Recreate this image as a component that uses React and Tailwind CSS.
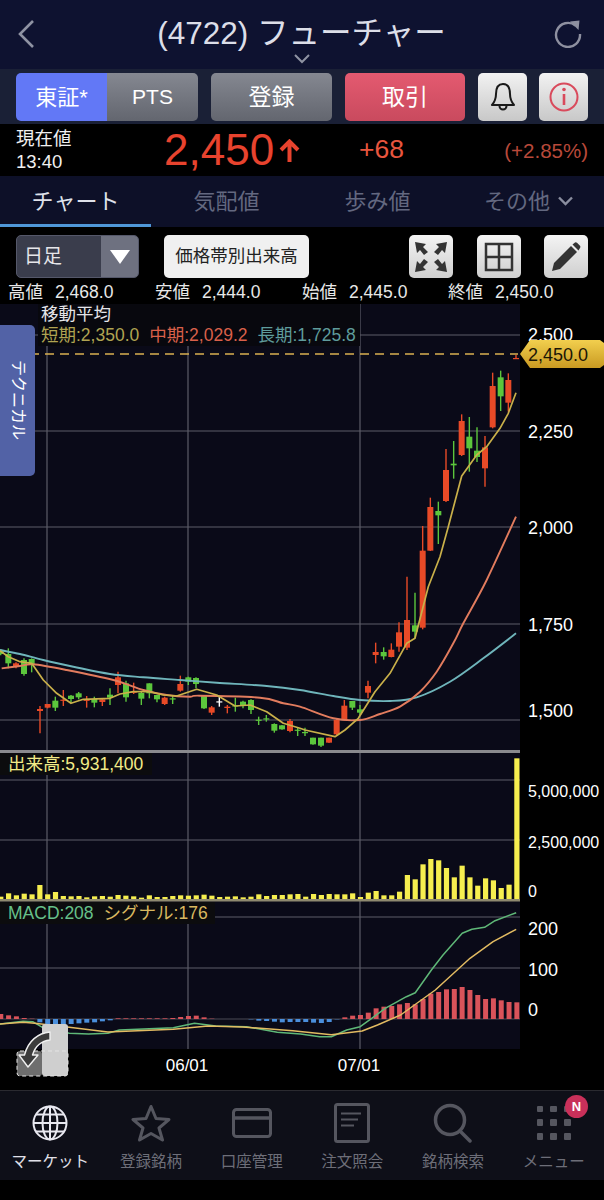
// Stock chart screen, mobile

// candle data: [x, wickTop, bodyTop, bodyBottom, wickBottom, colour]
const RED = "#e84a27";
const GREEN = "#5cc63c";

const earlyCandles = [
  [2, 58, 60, 72, 76, "g"], [25, 55, 72, 100, 115, "g"], [48, 97, 100, 110, 115, "r"], [72, 85, 90, 132, 137, "g"],
  [95, 85, 87, 105, 127, "g"], [120, 228, 237, 243, 310, "r"], [143, 222, 222, 233, 235, "r"], [166, 200, 212, 233, 243, "g"],
  [190, 180, 209, 212, 228, "r"], [213, 195, 197, 207, 218, "g"], [236, 186, 190, 202, 208, "g"], [260, 198, 209, 211, 233, "r"],
  [283, 200, 207, 218, 232, "g"], [307, 205, 208, 216, 228, "r"], [330, 175, 194, 203, 225, "g"], [354, 125, 142, 165, 190, "r"],
  [378, 152, 160, 202, 215, "g"], [401, 158, 185, 187, 192, "r"], [424, 186, 189, 206, 225, "g"], [448, 160, 160, 190, 205, "g"],
  [471, 195, 195, 208, 217, "g"], [494, 200, 203, 222, 225, "r"], [518, 198, 205, 207, 222, "g"], [541, 137, 162, 182, 185, "r"],
  [565, 140, 142, 155, 165, "g"], [588, 142, 144, 162, 175, "g"], [612, 195, 198, 235, 237, "g"], [635, 228, 232, 248, 255, "r"],
  [658, 200, 214, 216, 230, "w"], [682, 225, 230, 234, 250, "r"], [706, 203, 226, 228, 245, "g"], [729, 212, 215, 228, 235, "g"],
  [753, 208, 210, 240, 252, "g"], [776, 260, 269, 271, 285, "g"], [799, 255, 265, 267, 275, "g"], [823, 280, 282, 302, 308, "g"],
  [846, 285, 286, 298, 299, "g"], [870, 267, 273, 303, 307, "r"], [893, 292, 299, 301, 318, "g"],
].map(([x, a, b, c, d, k]) => [x / 3, 630 + a / 3, 630 + b / 3, 630 + c / 3, 630 + d / 3, k]);

const lateCandles = [
  [15, 1103, 1116, 1119, 1128, "g"], [39, 1133, 1133, 1153, 1154, "g"], [63, 1133, 1133, 1157, 1161, "g"], [87, 1133, 1133, 1148, 1149, "r"],
  [110, 1075, 1080, 1123, 1125, "r"], [133, 1020, 1037, 1080, 1081, "r"], [157, 1023, 1023, 1043, 1050, "g"], [180, 1035, 1048, 1058, 1065, "g"],
  [204, 962, 978, 998, 1015, "r"], [227, 848, 876, 885, 910, "r"], [251, 862, 876, 889, 899, "g"], [274, 850, 869, 891, 892, "r"],
  [297, 787, 817, 860, 875, "r"], [321, 650, 780, 863, 870, "r"], [345, 698, 796, 815, 835, "g"], [368, 498, 572, 803, 808, "r"],
  [391, 413, 441, 572, 573, "r"], [415, 425, 453, 466, 552, "g"], [438, 267, 330, 423, 426, "r"], [461, 243, 311, 316, 356, "g"],
  [485, 163, 183, 285, 288, "r"], [508, 171, 230, 265, 335, "g"], [531, 202, 272, 291, 306, "g"], [555, 228, 262, 325, 380, "r"],
  [578, 38, 78, 202, 205, "r"], [602, 32, 52, 109, 153, "g"], [625, 40, 60, 128, 155, "r"], [648, -15, -6, -4, -4, "r"],
].map(([x, a, b, c, d, k]) => [300 + x / 3, 360 + a / 3, 360 + b / 3, 360 + c / 3, 360 + d / 3, k]);

const candles = [...earlyCandles, ...lateCandles];

function joinPoints(early, late) {
  const a = early.map(([x, y]) => [x / 3, 630 + y / 3]);
  const b = late.map(([x, y]) => [300 + x / 3, 360 + y / 3]);
  return [...a, ...b];
}

function toPolyline(points) {
  return points.map(([x, y]) => `${x.toFixed(1)},${y.toFixed(1)}`).join(" ");
}

// catmull-rom, the two slower averages have no kinks
function toSmoothPath(p) {
  let d = `M${p[0][0]} ${p[0][1]}`;
  for (let i = 0; i < p.length - 1; i++) {
    const prev = p[Math.max(i - 1, 0)];
    const next = p[Math.min(i + 2, p.length - 1)];
    const c1x = p[i][0] + (p[i + 1][0] - prev[0]) / 6;
    const c1y = p[i][1] + (p[i + 1][1] - prev[1]) / 6;
    const c2x = p[i + 1][0] - (next[0] - p[i][0]) / 6;
    const c2y = p[i + 1][1] - (next[1] - p[i][1]) / 6;
    d += ` C${c1x.toFixed(1)} ${c1y.toFixed(1)} ${c2x.toFixed(1)} ${c2y.toFixed(1)} ${p[i + 1][0].toFixed(1)} ${p[i + 1][1].toFixed(1)}`;
  }
  return d;
}

const shortMa = toPolyline(joinPoints(
  [[0, 62], [25, 80], [60, 95], [95, 100], [130, 150], [170, 190], [213, 220], [250, 208], [330, 205], [360, 192], [400, 185], [450, 185], [490, 195], [530, 198], [590, 178], [650, 195], [705, 228], [750, 225], [800, 245], [850, 280], [900, 295]],
  [[15, 1110], [105, 1130], [135, 1110], [175, 1075], [225, 995], [270, 940], [320, 850], [345, 835], [385, 680], [420, 590], [445, 500], [485, 348], [530, 285], [560, 260], [600, 205], [625, 160], [648, 98]]
));
const midMa = toSmoothPath(joinPoints(
  [[5, 115], [60, 108], [100, 103], [200, 120], [340, 150], [430, 180], [500, 195], [570, 200], [600, 197], [780, 203], [850, 220]],
  [[0, 1040], [100, 1075], [180, 1080], [240, 1062], [300, 1040], [360, 995], [410, 935], [460, 850], [490, 790], [560, 660], [648, 470]]
));
const longMa = toSmoothPath(joinPoints(
  [[0, 60], [60, 72], [130, 90], [220, 110], [330, 132], [430, 142], [540, 150], [650, 158], [800, 168]],
  [[0, 990], [100, 1008], [180, 1020], [270, 1023], [350, 1012], [450, 965], [550, 895], [648, 820]]
));

const volumeTops = [
  440, 430, 436, 431, 433, 405, 433, 426, 438, 439, 438, 442, 439, 438, 440, 435, 437, 439, 443, 436, 441, 441, 438,
  436, 437, 436, 434, 437, 441, 440, 439, 442, 440, 433, 438, 435, 435, 433, 432, 440, 432, 435, 432, 433, 433, 430,
  441, 428, 423, 436, 436, 425, 375, 388, 343, 327, 331, 354, 382, 347, 382, 407, 385, 391, 414, 404, 25,
];

const macdBars = [
  342, 346, 349, 354, 356, 367, 372, 373, 375, 372, 370, 368, 367, 364, 361, 355, 355, 355, 355, 355, 355, 355, 354,
  351, 348, 347, 352, 356, 357, 357, 357, 357, 358, 362, 363, 365, 367, 366, 366, 366, 368, 369, 366, 358, 352, 347,
  345, 338, 325, 320, 318, 313, 309, 313, 297, 281, 276, 268, 267, 261, 270, 285, 297, 295, 301, 306, 307,
];

function macdPoints(list) {
  return list.map(([x, y]) => `${(x / 2.596).toFixed(1)},${(900 + y / 3).toFixed(1)}`).join(" ");
}

const macdLine = macdPoints([[0, 372], [60, 364], [85, 365], [110, 382], [180, 400], [230, 402], [280, 400], [310, 390], [450, 383], [505, 370], [560, 378], [640, 380], [720, 397], [780, 402], [830, 410], [860, 410], [900, 390], [935, 380], [965, 355], [1000, 325], [1055, 290], [1078, 278], [1120, 210], [1150, 165], [1200, 100], [1225, 88], [1258, 82], [1285, 62], [1340, 38]]);
const signalLine = macdPoints([[0, 372], [60, 367], [90, 370], [180, 382], [280, 396], [450, 388], [540, 378], [630, 381], [760, 392], [860, 404], [940, 393], [980, 375], [1040, 345], [1130, 270], [1220, 175], [1280, 125], [1340, 88]]);

const priceGrid = [335, 431, 527, 624, 720];
const priceLabels = [["2,500", 341], ["2,250", 438], ["2,000", 534], ["1,750", 631], ["1,500", 717]];

function ChartCanvas() {
  return (
    <svg width="604" height="786" viewBox="0 304 604 786" className="block">
      <defs>
        <linearGradient id="tag" x1="0" y1="0" x2="0" y2="1">
          <stop offset="0" stopColor="#f2cf4e" />
          <stop offset="1" stopColor="#c99a22" />
        </linearGradient>
      </defs>
      <rect x="0" y="304" width="520" height="745" fill="#0a0a18" />

      {[47, 188, 360].map((x) => (
        <line key={x} x1={x} x2={x} y1="304" y2="1049" stroke="#5c5c68" strokeWidth="1.2" />
      ))}
      {[...priceGrid, 780, 840, 917, 968].map((y) => (
        <line key={y} x1="0" x2="520" y1={y} y2={y} stroke="#5c5c68" strokeWidth="1.2" />
      ))}
      <line x1="0" x2="520" y1="1019" y2="1019" stroke="#4a4a55" strokeWidth="1" />

      {candles.map(([x, a, b, c, d, k], i) => {
        const color = k === "r" ? RED : k === "g" ? GREEN : "#ffffff";
        return (
          <g key={i}>
            <line x1={x} x2={x} y1={a} y2={d} stroke={color} strokeWidth="1.4" />
            <rect x={x - 3} y={b} width="6" height={Math.max(c - b, 1.2)} fill={color} />
          </g>
        );
      })}
      <path d={longMa} fill="none" stroke="#6fb5bb" strokeWidth="1.9" />
      <path d={midMa} fill="none" stroke="#e27c5e" strokeWidth="1.9" />
      <polyline points={shortMa} fill="none" stroke="#c9b04a" strokeWidth="1.7" strokeLinejoin="round" />

      <line x1="0" x2="518" y1="354" y2="354" stroke="#d9b050" strokeWidth="1.6" strokeDasharray="9 6" />

      <rect x="0" y="750" width="520" height="3" fill="#8a8a8e" />
      {volumeTops.map((top, i) => {
        const x = (2 + 20.3 * i) / 2.596;
        const y = 750 + top / 3;
        return <rect key={i} x={x - 2.6} y={y} width="5.2" height={899 - y} fill="#f6ee4f" />;
      })}
      <rect x="0" y="899" width="520" height="2.5" fill="#8f8a70" />

      {macdBars.map((top, i) => {
        const x = (2 + 20.3 * i) / 2.596;
        const y = 900 + top / 3;
        return top < 358 ? (
          <rect key={i} x={x - 2.5} y={y} width="5" height={1019 - y} fill="#d9535a" />
        ) : (
          <rect key={i} x={x - 2.5} y={1019} width="5" height={y - 1019} fill="#4a8fdc" />
        );
      })}
      <polyline points={macdLine} fill="none" stroke="#5fb878" strokeWidth="1.5" strokeLinejoin="round" />
      <polyline points={signalLine} fill="none" stroke="#e2bb62" strokeWidth="1.5" strokeLinejoin="round" />

      <g fill="#ffffff" fontSize="18">
        {priceLabels.map(([label, y]) => (
          <text key={label} x="528" y={y}>{label}</text>
        ))}
      </g>
      <polygon points="520,354 530,340 600,340 604,343 604,365 600,368 530,368" fill="url(#tag)" />
      <text x="528" y="361" fontSize="18" fill="#1b1606">2,450.0</text>
      <g fill="#ffffff" fontSize="16">
        <text x="528" y="797">5,000,000</text>
        <text x="528" y="848">2,500,000</text>
        <text x="528" y="897">0</text>
      </g>
      <g fill="#ffffff" fontSize="18">
        <text x="528" y="935">200</text>
        <text x="528" y="976">100</text>
        <text x="528" y="1016">0</text>
      </g>
      <g fill="#ffffff" fontSize="17" textAnchor="middle">
        <text x="187" y="1071">06/01</text>
        <text x="359" y="1071">07/01</text>
      </g>

      {/* panel swap handle */}
      <rect x="42" y="1024" width="26" height="52" rx="3" fill="#cfcfcf" />
      <rect x="17" y="1051" width="25" height="25" rx="3" fill="#6e6e6e" />
      <rect x="17" y="1051" width="51" height="25" rx="3" fill="none" stroke="#e4e4e4" strokeDasharray="4 3" />
      <path
        d="M50 1032 C38 1033 28 1041 24.5 1055 L19 1055 L28 1067 L38 1055 L32.5 1055 C35 1047 41 1041 50 1040 Z"
        fill="#3c3c3c"
        stroke="#f0f0f0"
        strokeWidth="1.4"
        strokeLinejoin="round"
      />
    </svg>
  );
}

function ChartOverlays() {
  return (
    <>
      <div className="absolute left-[38px] top-0 h-[42px] w-[322px] bg-[#08080e] pl-[3px] text-[17.5px] leading-[21px]">
        <div className="text-[#e4e4e8]">移動平均</div>
        <div className="flex gap-[10px] whitespace-nowrap">
          <span className="text-[#b0a452]">短期:2,350.0</span>
          <span className="text-[#d9604a]">中期:2,029.2</span>
          <span className="text-[#5f9c9c]">長期:1,725.8</span>
        </div>
      </div>
      <div className="absolute left-0 top-[21px] flex h-[151px] w-[35px] items-center justify-center rounded-r-[5px] bg-[#5262a6]">
        <span className="text-[16px] text-white [text-orientation:sideways] [writing-mode:vertical-rl]">テクニカル</span>
      </div>
      <div className="absolute left-0 top-[449px] h-[22px] w-[152px] bg-[#0c0c0e] pl-[8px] text-[17.5px] leading-[22px] whitespace-nowrap text-[#f3ec88]">
        出来高:5,931,400
      </div>
      <div className="absolute left-0 top-[598px] flex h-[22px] w-[215px] gap-[10px] bg-[#0c0c0e] pl-[8px] text-[17.5px] leading-[22px] whitespace-nowrap">
        <span className="text-[#66c08a]">MACD:208</span>
        <span className="text-[#d8b860]">シグナル:176</span>
      </div>
    </>
  );
}

function Header() {
  return (
    <header className="relative flex h-[69px] items-center justify-between bg-[#0e1230] px-[17px] pb-[1px]">
      <svg width="18" height="30" viewBox="0 0 18 30" fill="none" stroke="#8f93a3" strokeWidth="2.6">
        <path d="M16 2 L3 15 L16 28" />
      </svg>
      <h1 className="ml-[14px] text-[31.5px] leading-none font-normal whitespace-nowrap text-[#dcdee8]">(4722) フューチャー</h1>
      <svg className="mr-[5px]" width="28" height="28" viewBox="0 0 28 28" fill="none" stroke="#8e90a0" strokeWidth="2.4">
        <path d="M21.5 5.5 A12 12 0 1 0 26 14" />
        <path d="M16 1.5 L25.5 0.5 L24.5 10 Z" fill="#8e90a0" stroke="none" />
      </svg>
      <svg className="absolute left-[294px] top-[54px]" width="16" height="10" viewBox="0 0 16 10" fill="none" stroke="#8f93a3" strokeWidth="2">
        <path d="M1 1 L8 8 L15 1" />
      </svg>
    </header>
  );
}

function Toolbar() {
  return (
    <div className="flex h-[55px] items-start bg-[#1a2036] pl-[16px] pt-[4px]">
      <div className="flex h-[48px] w-[182px] overflow-hidden rounded-[5px]">
        <div className="flex w-[91px] items-center justify-center bg-[#6278f6] text-[22px] text-white">東証*</div>
        <div className="flex w-[91px] items-center justify-center bg-gradient-to-b from-[#858891] to-[#63666f] text-[21px] text-white">PTS</div>
      </div>
      <button className="ml-[13px] h-[48px] w-[121px] rounded-[5px] bg-gradient-to-b from-[#858891] to-[#63666f] text-[23px] text-white">登録</button>
      <button className="ml-[13px] h-[48px] w-[120px] rounded-[5px] bg-gradient-to-b from-[#e45a70] to-[#c94a5e] text-[23px] text-white">取引</button>
      <div className="ml-[13px] flex h-[48px] w-[49px] items-center justify-center rounded-[5px] bg-gradient-to-b from-[#f2f2f2] to-[#c8c8c8]">
        <svg width="28" height="32" viewBox="0 0 28 32" fill="none" stroke="#1a1a1a" strokeWidth="2">
          <path d="M14 3 C8.5 3 7 8 7 13 C7 18 5.5 21 3 24 L25 24 C22.5 21 21 18 21 13 C21 8 19.5 3 14 3 Z" strokeLinejoin="round" />
          <path d="M10.5 25 A3.5 3.5 0 0 0 17.5 25" />
        </svg>
      </div>
      <div className="ml-[12px] flex h-[48px] w-[49px] items-center justify-center rounded-[5px] bg-gradient-to-b from-[#f2f2f2] to-[#c8c8c8]">
        <svg width="30" height="30" viewBox="0 0 30 30" fill="none" stroke="#d94a5c" strokeWidth="2">
          <circle cx="15" cy="15" r="13.5" />
          <path d="M15 12 L15 23" strokeWidth="2.6" />
          <circle cx="15" cy="7.5" r="1.8" fill="#d94a5c" stroke="none" />
        </svg>
      </div>
    </div>
  );
}

function QuoteRow() {
  return (
    <div className="relative flex h-[52px] bg-black">
      <div className="ml-[16px] w-[100px] pt-[3px] text-[18.5px] leading-[23px] text-[#f0f0f0]">
        <div>現在値</div>
        <div>13:40</div>
      </div>
      <div className="ml-[48px] flex items-center">
        <span className="text-[44px] leading-none text-[#e8432e]">2,450</span>
        <svg className="ml-[5px]" width="21" height="23" viewBox="0 0 21 23" fill="none" stroke="#e8432e" strokeWidth="4">
          <path d="M10.5 23 L10.5 3 M2 11 L10.5 2.5 L19 11" />
        </svg>
      </div>
      <span className="ml-[59px] self-center text-[26.5px] text-[#e8553e]">+68</span>
      <span className="absolute right-[16px] top-[12px] text-[20.5px] text-[#b8493a]">(+2.85%)</span>
    </div>
  );
}

function Tabs() {
  return (
    <nav className="grid h-[51px] grid-cols-4 bg-[#0d1028] text-[22px]">
      <div className="flex items-center justify-center border-b-[3px] border-[#4f97d8] pt-[2px] text-[#dfe1ea]">チャート</div>
      <div className="flex items-center justify-center pb-[1px] text-[#636880]">気配値</div>
      <div className="flex items-center justify-center pb-[1px] text-[#636880]">歩み値</div>
      <div className="flex items-center justify-center gap-[8px] pb-[1px] text-[#636880]">
        その他
        <svg width="15" height="10" viewBox="0 0 15 10" fill="none" stroke="#8a8e9f" strokeWidth="2.4">
          <path d="M1 1.5 L7.5 8 L14 1.5" />
        </svg>
      </div>
    </nav>
  );
}

function IconButton({ children, className }) {
  return (
    <div className={`flex h-[43px] w-[44px] items-center justify-center rounded-[5px] bg-gradient-to-b from-[#f4f4f4] to-[#cfcfcf] ${className}`}>
      {children}
    </div>
  );
}

function Controls() {
  return (
    <div className="flex h-[56px] items-start bg-black pl-[16px] pt-[8px]">
      <div className="flex h-[43px] w-[123px] overflow-hidden rounded-[5px] border border-[#55586a] bg-[#3a3d4c]">
        <span className="flex w-[84px] items-center pl-[7px] pt-[2px] text-[19px] text-[#e6e6ea]">日足</span>
        <span className="flex flex-1 items-center justify-center bg-[#6e7180]">
          <svg width="20" height="14" viewBox="0 0 20 14"><path d="M0 0 L20 0 L10 14 Z" fill="#ffffff" /></svg>
        </span>
      </div>
      <div className="ml-[25px] flex h-[43px] w-[145px] items-center justify-center rounded-[5px] bg-[#f0f0f0] text-[17.5px] whitespace-nowrap text-[#222222]">
        価格帯別出来高
      </div>
      <IconButton className="ml-[100px]">
        <svg width="34" height="32" viewBox="0 0 34 32" fill="#333333">
          <path d="M1 1 L12 3 L9 6 L14 11 L10 14 L6 9 L3 12 Z" />
          <path d="M33 1 L22 3 L25 6 L20 11 L24 14 L28 9 L31 12 Z" />
          <path d="M1 31 L12 29 L9 26 L14 21 L10 18 L6 23 L3 20 Z" />
          <path d="M33 31 L22 29 L25 26 L20 21 L24 18 L28 23 L31 20 Z" />
        </svg>
      </IconButton>
      <IconButton className="ml-[24px]">
        <svg width="30" height="30" viewBox="0 0 30 30" fill="none" stroke="#333333" strokeWidth="2.5">
          <rect x="2" y="2" width="26" height="26" />
          <path d="M15 2 L15 28 M2 15 L28 15" />
        </svg>
      </IconButton>
      <IconButton className="ml-[23px]">
        <svg width="30" height="30" viewBox="0 0 30 30" fill="#333333">
          <path d="M1 29 L3 21 L20 4 L26 10 L9 27 Z" />
          <path d="M21.5 2.5 L24 0.5 Q25 0 26 0.8 L29 3.8 Q30 5 29 6 L27.5 8.5 Z" />
        </svg>
      </IconButton>
    </div>
  );
}

const ohlc = [
  ["高値", "2,468.0"],
  ["安値", "2,444.0"],
  ["始値", "2,445.0"],
  ["終値", "2,450.0"],
];

function OhlcRow() {
  return (
    <div className="grid h-[21px] grid-cols-[147px_147px_146px_1fr] bg-black pl-[8px] text-[17.5px] leading-[19px] whitespace-nowrap text-[#e8e8e8]">
      {ohlc.map(([label, value]) => (
        <div key={label} className="flex gap-[12px]">
          <span>{label}</span>
          <span>{value}</span>
        </div>
      ))}
    </div>
  );
}

const ICON_GREY = "#55565f";

const navItems = [
  {
    label: "マーケット",
    active: true,
    icon: (
      <svg width="36" height="36" viewBox="0 0 36 36" fill="none" stroke="#e8e8f0" strokeWidth="2">
        <circle cx="18" cy="18" r="16.5" />
        <ellipse cx="18" cy="18" rx="7.5" ry="16.5" />
        <path d="M18 1.5 L18 34.5 M1.5 18 L34.5 18 M4 9.5 L32 9.5 M4 26.5 L32 26.5" />
      </svg>
    ),
  },
  {
    label: "登録銘柄",
    icon: (
      <svg width="40" height="38" viewBox="0 0 40 38" fill="none" stroke={ICON_GREY} strokeWidth="3" strokeLinejoin="round">
        <path d="M20 2.5 L25 14.5 L38 15.5 L28 24 L31.5 36 L20 29.5 L8.5 36 L12 24 L2 15.5 L15 14.5 Z" />
      </svg>
    ),
  },
  {
    label: "口座管理",
    icon: (
      <svg width="40" height="30" viewBox="0 0 40 30" fill="none" stroke={ICON_GREY} strokeWidth="3">
        <rect x="1.5" y="1.5" width="37" height="27" rx="3" />
        <path d="M1.5 10 L38.5 10" strokeWidth="3.5" />
      </svg>
    ),
  },
  {
    label: "注文照会",
    icon: (
      <svg width="36" height="40" viewBox="0 0 36 40" fill="none" stroke={ICON_GREY} strokeWidth="3">
        <rect x="1.5" y="1.5" width="33" height="37" rx="2" />
        <path d="M7 10.5 L27 10.5 M7 16.5 L24 16.5 M7 22.5 L20 22.5" strokeWidth="2" />
      </svg>
    ),
  },
  {
    label: "銘柄検索",
    icon: (
      <svg width="40" height="40" viewBox="0 0 40 40" fill="none" stroke={ICON_GREY} strokeWidth="3.5">
        <circle cx="17" cy="17" r="14.5" />
        <path d="M27 28 L37 38" strokeLinecap="round" />
      </svg>
    ),
  },
  {
    label: "メニュー",
    icon: (
      <div className="grid h-[34px] w-[34px] grid-cols-3 gap-[7.3px]">
        {[0, 1, 2, 3, 4, 5, 6, 7, 8].map((n) => (
          <span key={n} className="size-[6.5px] rounded-[1px] bg-[#55565f]" />
        ))}
      </div>
    ),
  },
];

function BottomNav() {
  return (
    <nav className="relative grid h-[90px] grid-cols-6 border-t border-[#2a2a30] bg-[#0e0f18]">
      {navItems.map((item) => (
        <div key={item.label} className="flex flex-col items-center">
          <div className="flex h-[58px] items-center pt-[5px]">{item.icon}</div>
          <span className={`mt-[2px] text-[15.5px] leading-[22px] whitespace-nowrap ${item.active ? "text-[#e0e0e8]" : "text-[#6d6e78]"}`}>
            {item.label}
          </span>
        </div>
      ))}
      <span className="absolute left-[565px] top-[4px] flex size-[23px] items-center justify-center rounded-full bg-[#c9305a] text-[13px] font-bold text-white">
        N
      </span>
    </nav>
  );
}

export default function App() {
  return (
    <main className="h-[1200px] w-[604px] overflow-hidden bg-black font-['Liberation_Sans','Noto_Sans_CJK_JP',sans-serif]">
      <Header />
      <Toolbar />
      <QuoteRow />
      <Tabs />
      <Controls />
      <OhlcRow />
      <section className="relative h-[786px]">
        <ChartCanvas />
        <ChartOverlays />
      </section>
      <BottomNav />
    </main>
  );
}
